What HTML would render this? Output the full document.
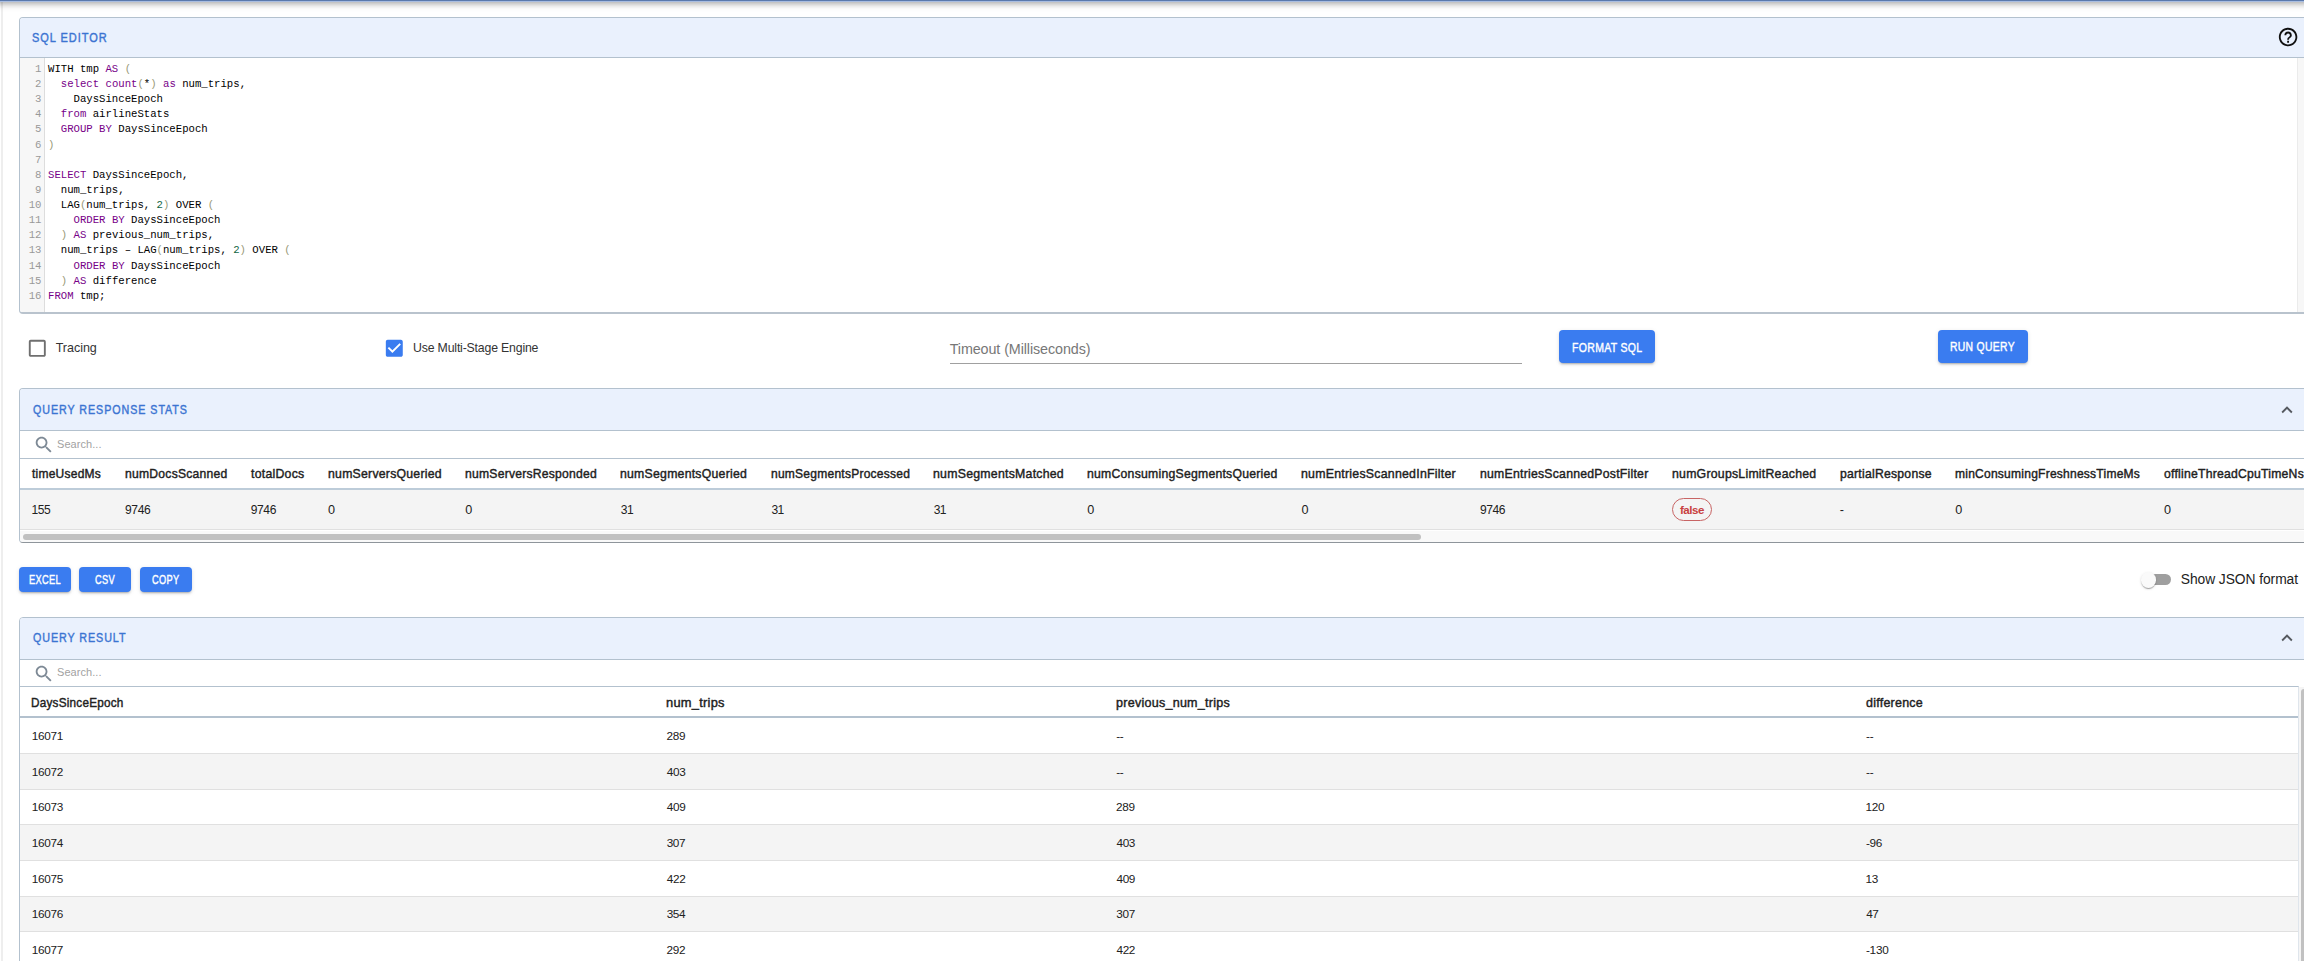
<!DOCTYPE html>
<html><head><meta charset="utf-8"><style>
html,body{margin:0;padding:0;background:#fff;}
body{width:2304px;height:961px;overflow:hidden;position:relative;font-family:"Liberation Sans",sans-serif;}
.t{position:absolute;white-space:pre;line-height:1;}
</style></head><body>
<div style="position:absolute;left:-60px;top:-61px;width:2424px;height:62px;background:#5a79ad;border-bottom:1px solid #a9bde0;box-shadow:0 2px 4px -1px rgba(0,0,0,0.16),0 4px 5px 0 rgba(0,0,0,0.11),0 1px 10px 0 rgba(0,0,0,0.10);z-index:5"></div>
<div style="position:absolute;left:1px;top:0;width:2px;height:961px;background:#eeeeee"></div>
<div style="position:absolute;left:19px;top:17px;width:2400px;height:294px;border:1px solid #B3C1CE;border-bottom:2px solid #b9c3cd;border-radius:4px;overflow:hidden;background:#fff">
<div style="position:absolute;left:0;top:0;width:100%;height:39px;background:#EAF1FD;border-bottom:1px solid #B3C1CE"></div>
<div style="position:absolute;left:0;top:40px;width:24px;height:260px;background:#f7f7f7;border-right:1px solid #ddd"></div>
</div>
<div style="position:absolute;left:2297px;top:58px;width:7px;height:254px;background:#f7f7f7;border-left:1px solid #ebebeb"></div>
<div class="t" style="left:31.81px;top:32.01px;font-size:12.35px;font-family:'Liberation Sans',sans-serif;font-weight:400;color:#3b74d2;letter-spacing:1.100px;transform:scaleX(0.8901);transform-origin:0 0;-webkit-text-stroke:0.42px #3b74d2;">SQL EDITOR</div>
<svg style="position:absolute;left:2276.8px;top:25.9px" width="22.2" height="22.2" viewBox="0 0 24 24"><path fill="#111" d="M11 18h2v-2h-2v2zm1-16C6.48 2 2 6.48 2 12s4.48 10 10 10 10-4.48 10-10S17.52 2 12 2zm0 18c-4.41 0-8-3.59-8-8s3.59-8 8-8 8 3.59 8 8-3.59 8-8 8zm0-14c-2.21 0-4 1.79-4 4h2c0-1.1.9-2 2-2s2 .9 2 2c0 2-3 1.75-3 5h2c0-2.25 3-2.5 3-5 0-2.21-1.79-4-4-4z"/></svg>
<div class="t" style="left:48px;top:64.01px;font-size:10.65px;font-family:'Liberation Mono',monospace;color:#000;white-space:pre">WITH tmp <span style="color:#708">AS</span> <span style="color:#997">(</span></div>
<div class="t" style="left:0;width:41.5px;text-align:right;top:64.01px;font-size:10.65px;font-family:'Liberation Mono',monospace;color:#999">1</div>
<div class="t" style="left:48px;top:79.01px;font-size:10.65px;font-family:'Liberation Mono',monospace;color:#000;white-space:pre">  <span style="color:#708">select</span> <span style="color:#708">count</span><span style="color:#997">(</span>*<span style="color:#997">)</span> <span style="color:#708">as</span> num_trips,</div>
<div class="t" style="left:0;width:41.5px;text-align:right;top:79.01px;font-size:10.65px;font-family:'Liberation Mono',monospace;color:#999">2</div>
<div class="t" style="left:48px;top:94.00px;font-size:10.65px;font-family:'Liberation Mono',monospace;color:#000;white-space:pre">    DaysSinceEpoch</div>
<div class="t" style="left:0;width:41.5px;text-align:right;top:94.00px;font-size:10.65px;font-family:'Liberation Mono',monospace;color:#999">3</div>
<div class="t" style="left:48px;top:109.01px;font-size:10.65px;font-family:'Liberation Mono',monospace;color:#000;white-space:pre">  <span style="color:#708">from</span> airlineStats</div>
<div class="t" style="left:0;width:41.5px;text-align:right;top:109.01px;font-size:10.65px;font-family:'Liberation Mono',monospace;color:#999">4</div>
<div class="t" style="left:48px;top:124.01px;font-size:10.65px;font-family:'Liberation Mono',monospace;color:#000;white-space:pre">  <span style="color:#708">GROUP</span> <span style="color:#708">BY</span> DaysSinceEpoch</div>
<div class="t" style="left:0;width:41.5px;text-align:right;top:124.01px;font-size:10.65px;font-family:'Liberation Mono',monospace;color:#999">5</div>
<div class="t" style="left:48px;top:140.02px;font-size:10.65px;font-family:'Liberation Mono',monospace;color:#000;white-space:pre"><span style="color:#997">)</span></div>
<div class="t" style="left:0;width:41.5px;text-align:right;top:140.02px;font-size:10.65px;font-family:'Liberation Mono',monospace;color:#999">6</div>
<div class="t" style="left:48px;top:155.01px;font-size:10.65px;font-family:'Liberation Mono',monospace;color:#000;white-space:pre"></div>
<div class="t" style="left:0;width:41.5px;text-align:right;top:155.01px;font-size:10.65px;font-family:'Liberation Mono',monospace;color:#999">7</div>
<div class="t" style="left:48px;top:170.01px;font-size:10.65px;font-family:'Liberation Mono',monospace;color:#000;white-space:pre"><span style="color:#708">SELECT</span> DaysSinceEpoch,</div>
<div class="t" style="left:0;width:41.5px;text-align:right;top:170.01px;font-size:10.65px;font-family:'Liberation Mono',monospace;color:#999">8</div>
<div class="t" style="left:48px;top:185.02px;font-size:10.65px;font-family:'Liberation Mono',monospace;color:#000;white-space:pre">  num_trips,</div>
<div class="t" style="left:0;width:41.5px;text-align:right;top:185.02px;font-size:10.65px;font-family:'Liberation Mono',monospace;color:#999">9</div>
<div class="t" style="left:48px;top:200.01px;font-size:10.65px;font-family:'Liberation Mono',monospace;color:#000;white-space:pre">  LAG<span style="color:#997">(</span>num_trips, <span style="color:#164">2</span><span style="color:#997">)</span> OVER <span style="color:#997">(</span></div>
<div class="t" style="left:0;width:41.5px;text-align:right;top:200.01px;font-size:10.65px;font-family:'Liberation Mono',monospace;color:#999">10</div>
<div class="t" style="left:48px;top:215.01px;font-size:10.65px;font-family:'Liberation Mono',monospace;color:#000;white-space:pre">    <span style="color:#708">ORDER</span> <span style="color:#708">BY</span> DaysSinceEpoch</div>
<div class="t" style="left:0;width:41.5px;text-align:right;top:215.01px;font-size:10.65px;font-family:'Liberation Mono',monospace;color:#999">11</div>
<div class="t" style="left:48px;top:230.02px;font-size:10.65px;font-family:'Liberation Mono',monospace;color:#000;white-space:pre">  <span style="color:#997">)</span> <span style="color:#708">AS</span> previous_num_trips,</div>
<div class="t" style="left:0;width:41.5px;text-align:right;top:230.02px;font-size:10.65px;font-family:'Liberation Mono',monospace;color:#999">12</div>
<div class="t" style="left:48px;top:245.01px;font-size:10.65px;font-family:'Liberation Mono',monospace;color:#000;white-space:pre">  num_trips – LAG<span style="color:#997">(</span>num_trips, <span style="color:#164">2</span><span style="color:#997">)</span> OVER <span style="color:#997">(</span></div>
<div class="t" style="left:0;width:41.5px;text-align:right;top:245.01px;font-size:10.65px;font-family:'Liberation Mono',monospace;color:#999">13</div>
<div class="t" style="left:48px;top:261.01px;font-size:10.65px;font-family:'Liberation Mono',monospace;color:#000;white-space:pre">    <span style="color:#708">ORDER</span> <span style="color:#708">BY</span> DaysSinceEpoch</div>
<div class="t" style="left:0;width:41.5px;text-align:right;top:261.01px;font-size:10.65px;font-family:'Liberation Mono',monospace;color:#999">14</div>
<div class="t" style="left:48px;top:276.02px;font-size:10.65px;font-family:'Liberation Mono',monospace;color:#000;white-space:pre">  <span style="color:#997">)</span> <span style="color:#708">AS</span> difference</div>
<div class="t" style="left:0;width:41.5px;text-align:right;top:276.02px;font-size:10.65px;font-family:'Liberation Mono',monospace;color:#999">15</div>
<div class="t" style="left:48px;top:291.00px;font-size:10.65px;font-family:'Liberation Mono',monospace;color:#000;white-space:pre"><span style="color:#708">FROM</span> tmp;</div>
<div class="t" style="left:0;width:41.5px;text-align:right;top:291.00px;font-size:10.65px;font-family:'Liberation Mono',monospace;color:#999">16</div>
<svg style="position:absolute;left:26.2px;top:337.3px" width="22.6" height="22.6" viewBox="0 0 24 24"><path fill="#6f6f6f" d="M19 5v14H5V5h14m0-2H5c-1.11 0-2 .9-2 2v14c0 1.1.89 2 2 2h14c1.1 0 2-.9 2-2V5c0-1.1-.9-2-2-2z"/></svg>
<div class="t" style="left:55.72px;top:342.00px;font-size:12.55px;font-family:'Liberation Sans',sans-serif;font-weight:400;color:#333;letter-spacing:-0.050px;">Tracing</div>
<svg style="position:absolute;left:382.9px;top:337.3px" width="22.6" height="22.6" viewBox="0 0 24 24"><path fill="#3a7cf0" d="M19 3H5c-1.11 0-2 .9-2 2v14c0 1.1.89 2 2 2h14c1.11 0 2-.9 2-2V5c0-1.1-.89-2-2-2zm-9 14l-5-5 1.41-1.41L10 14.17l7.59-7.59L19 8l-9 9z"/></svg>
<div class="t" style="left:413.05px;top:342.02px;font-size:12.29px;font-family:'Liberation Sans',sans-serif;font-weight:400;color:#333;letter-spacing:-0.172px;">Use Multi-Stage Engine</div>
<div class="t" style="left:949.68px;top:342.00px;font-size:14.34px;font-family:'Liberation Sans',sans-serif;font-weight:400;color:#777;letter-spacing:-0.093px;">Timeout (Milliseconds)</div>
<div style="position:absolute;left:950px;top:363px;width:572px;height:1px;background:#a0a0a0"></div>
<div style="position:absolute;left:1559.4px;top:330.2px;width:95.6px;height:32.6px;background:#3a7cf0;border-radius:4px;box-shadow:0 3px 1px -2px rgba(0,0,0,0.14),0 2px 2px 0 rgba(0,0,0,0.10),0 1px 5px 0 rgba(0,0,0,0.09)"></div>
<div class="t" style="left:1571.84px;top:341.00px;font-size:13.08px;font-family:'Liberation Sans',sans-serif;font-weight:400;color:#fff;letter-spacing:0.400px;transform:scaleX(0.8031);transform-origin:0 0;-webkit-text-stroke:0.42px #fff;">FORMAT SQL</div>
<div style="position:absolute;left:1937.7px;top:330.2px;width:90.2px;height:32.6px;background:#3a7cf0;border-radius:4px;box-shadow:0 3px 1px -2px rgba(0,0,0,0.14),0 2px 2px 0 rgba(0,0,0,0.10),0 1px 5px 0 rgba(0,0,0,0.09)"></div>
<div class="t" style="left:1950.05px;top:341.01px;font-size:12.65px;font-family:'Liberation Sans',sans-serif;font-weight:400;color:#fff;letter-spacing:0.400px;transform:scaleX(0.8190);transform-origin:0 0;-webkit-text-stroke:0.42px #fff;">RUN QUERY</div>
<div style="position:absolute;left:19px;top:388px;width:2400px;height:153px;border:1px solid #B3C1CE;border-bottom:1px solid #8e959b;border-radius:4px;overflow:hidden;background:#fff">
<div style="position:absolute;left:0;top:0;width:100%;height:41px;background:#EAF1FD;border-bottom:1px solid #B3C1CE"></div>
<div style="position:absolute;left:0;top:69px;width:100%;height:0;border-top:1px solid #B3C1CE"></div>
<div style="position:absolute;left:0;top:99px;width:100%;height:39px;background:#f4f4f4;border-top:2px solid #BDCCD9;border-bottom:1px solid #e0e0e0"></div>
<div style="position:absolute;left:0;top:142px;width:100%;height:11px;background:#f9f9f9"></div>
<div style="position:absolute;left:3px;top:144.5px;width:1398px;height:6.5px;background:#c1c1c1;border-radius:4px"></div>
</div>
<div class="t" style="left:32.80px;top:404.01px;font-size:12.50px;font-family:'Liberation Sans',sans-serif;font-weight:400;color:#3b74d2;letter-spacing:1.100px;transform:scaleX(0.8567);transform-origin:0 0;-webkit-text-stroke:0.42px #3b74d2;">QUERY RESPONSE STATS</div>
<svg style="position:absolute;left:2275.6px;top:398.6px" width="22" height="22" viewBox="0 0 24 24"><path fill="#55595f" d="M12 8l-6 6 1.41 1.41L12 10.83l4.59 4.58L18 14z"/></svg>
<svg style="position:absolute;left:32.7px;top:434.0px" width="21.7" height="21.7" viewBox="0 0 24 24"><path fill="#7d8995" d="M15.5 14h-.79l-.28-.27C15.41 12.59 16 11.11 16 9.5 16 5.91 13.09 3 9.5 3S3 5.91 3 9.5 5.91 16 9.5 16c1.61 0 3.09-.59 4.23-1.57l.27.28v.79l5 4.99L20.49 19l-4.99-5zm-6 0C7.01 14 5 11.99 5 9.5S7.01 5 9.5 5 14 7.01 14 9.5 11.99 14 9.5 14z"/></svg>
<div class="t" style="left:57.00px;top:439.02px;font-size:11.01px;font-family:'Liberation Sans',sans-serif;font-weight:400;color:#a2a2a2;letter-spacing:0.054px;">Search...</div>
<div class="t" style="left:32.22px;top:468.01px;font-size:12.94px;font-family:'Liberation Sans',sans-serif;font-weight:400;color:#212121;letter-spacing:0.250px;transform:scaleX(0.9282);transform-origin:0 0;-webkit-text-stroke:0.42px #212121;">timeUsedMs</div>
<div class="t" style="left:31.48px;top:504.02px;font-size:12.06px;font-family:'Liberation Sans',sans-serif;font-weight:400;color:#212121;letter-spacing:-0.431px;">155</div>
<div class="t" style="left:124.80px;top:468.01px;font-size:12.94px;font-family:'Liberation Sans',sans-serif;font-weight:400;color:#212121;letter-spacing:0.250px;transform:scaleX(0.9388);transform-origin:0 0;-webkit-text-stroke:0.42px #212121;">numDocsScanned</div>
<div class="t" style="left:125.05px;top:504.02px;font-size:12.06px;font-family:'Liberation Sans',sans-serif;font-weight:400;color:#212121;letter-spacing:-0.395px;">9746</div>
<div class="t" style="left:251.12px;top:468.01px;font-size:12.94px;font-family:'Liberation Sans',sans-serif;font-weight:400;color:#212121;letter-spacing:0.250px;transform:scaleX(0.9519);transform-origin:0 0;-webkit-text-stroke:0.42px #212121;">totalDocs</div>
<div class="t" style="left:250.75px;top:504.02px;font-size:12.06px;font-family:'Liberation Sans',sans-serif;font-weight:400;color:#212121;letter-spacing:-0.395px;">9746</div>
<div class="t" style="left:327.69px;top:468.01px;font-size:12.94px;font-family:'Liberation Sans',sans-serif;font-weight:400;color:#212121;letter-spacing:0.250px;transform:scaleX(0.9486);transform-origin:0 0;-webkit-text-stroke:0.42px #212121;">numServersQueried</div>
<div class="t" style="left:328.01px;top:504.01px;font-size:12.65px;font-family:'Liberation Sans',sans-serif;font-weight:400;color:#212121;letter-spacing:0.000px;">0</div>
<div class="t" style="left:464.90px;top:468.01px;font-size:12.94px;font-family:'Liberation Sans',sans-serif;font-weight:400;color:#212121;letter-spacing:0.250px;transform:scaleX(0.9386);transform-origin:0 0;-webkit-text-stroke:0.42px #212121;">numServersResponded</div>
<div class="t" style="left:465.21px;top:504.01px;font-size:12.65px;font-family:'Liberation Sans',sans-serif;font-weight:400;color:#212121;letter-spacing:0.000px;">0</div>
<div class="t" style="left:620.49px;top:468.01px;font-size:12.94px;font-family:'Liberation Sans',sans-serif;font-weight:400;color:#212121;letter-spacing:0.250px;transform:scaleX(0.9485);transform-origin:0 0;-webkit-text-stroke:0.42px #212121;">numSegmentsQueried</div>
<div class="t" style="left:620.84px;top:504.02px;font-size:12.06px;font-family:'Liberation Sans',sans-serif;font-weight:400;color:#212121;letter-spacing:-0.570px;">31</div>
<div class="t" style="left:771.11px;top:468.01px;font-size:12.94px;font-family:'Liberation Sans',sans-serif;font-weight:400;color:#212121;letter-spacing:0.250px;transform:scaleX(0.9303);transform-origin:0 0;-webkit-text-stroke:0.42px #212121;">numSegmentsProcessed</div>
<div class="t" style="left:771.44px;top:504.02px;font-size:12.06px;font-family:'Liberation Sans',sans-serif;font-weight:400;color:#212121;letter-spacing:-0.570px;">31</div>
<div class="t" style="left:933.39px;top:468.01px;font-size:12.94px;font-family:'Liberation Sans',sans-serif;font-weight:400;color:#212121;letter-spacing:0.250px;transform:scaleX(0.9521);transform-origin:0 0;-webkit-text-stroke:0.42px #212121;">numSegmentsMatched</div>
<div class="t" style="left:933.74px;top:504.02px;font-size:12.06px;font-family:'Liberation Sans',sans-serif;font-weight:400;color:#212121;letter-spacing:-0.570px;">31</div>
<div class="t" style="left:1086.99px;top:468.01px;font-size:12.94px;font-family:'Liberation Sans',sans-serif;font-weight:400;color:#212121;letter-spacing:0.250px;transform:scaleX(0.9455);transform-origin:0 0;-webkit-text-stroke:0.42px #212121;">numConsumingSegmentsQueried</div>
<div class="t" style="left:1087.31px;top:504.01px;font-size:12.65px;font-family:'Liberation Sans',sans-serif;font-weight:400;color:#212121;letter-spacing:0.000px;">0</div>
<div class="t" style="left:1301.09px;top:468.01px;font-size:12.94px;font-family:'Liberation Sans',sans-serif;font-weight:400;color:#212121;letter-spacing:0.250px;transform:scaleX(0.9542);transform-origin:0 0;-webkit-text-stroke:0.42px #212121;">numEntriesScannedInFilter</div>
<div class="t" style="left:1301.41px;top:504.01px;font-size:12.65px;font-family:'Liberation Sans',sans-serif;font-weight:400;color:#212121;letter-spacing:0.000px;">0</div>
<div class="t" style="left:1479.69px;top:468.01px;font-size:12.94px;font-family:'Liberation Sans',sans-serif;font-weight:400;color:#212121;letter-spacing:0.250px;transform:scaleX(0.9469);transform-origin:0 0;-webkit-text-stroke:0.42px #212121;">numEntriesScannedPostFilter</div>
<div class="t" style="left:1479.95px;top:504.02px;font-size:12.06px;font-family:'Liberation Sans',sans-serif;font-weight:400;color:#212121;letter-spacing:-0.395px;">9746</div>
<div class="t" style="left:1671.79px;top:468.01px;font-size:12.94px;font-family:'Liberation Sans',sans-serif;font-weight:400;color:#212121;letter-spacing:0.250px;transform:scaleX(0.9500);transform-origin:0 0;-webkit-text-stroke:0.42px #212121;">numGroupsLimitReached</div>
<div class="t" style="left:1839.52px;top:468.01px;font-size:12.94px;font-family:'Liberation Sans',sans-serif;font-weight:400;color:#212121;letter-spacing:0.250px;transform:scaleX(0.9437);transform-origin:0 0;-webkit-text-stroke:0.42px #212121;">partialResponse</div>
<div class="t" style="left:1839.74px;top:504.01px;font-size:12.65px;font-family:'Liberation Sans',sans-serif;font-weight:400;color:#212121;letter-spacing:0.000px;">-</div>
<div class="t" style="left:1954.91px;top:468.01px;font-size:12.94px;font-family:'Liberation Sans',sans-serif;font-weight:400;color:#212121;letter-spacing:0.250px;transform:scaleX(0.9303);transform-origin:0 0;-webkit-text-stroke:0.42px #212121;">minConsumingFreshnessTimeMs</div>
<div class="t" style="left:1955.21px;top:504.01px;font-size:12.65px;font-family:'Liberation Sans',sans-serif;font-weight:400;color:#212121;letter-spacing:0.000px;">0</div>
<div class="t" style="left:2163.99px;top:468.01px;font-size:12.94px;font-family:'Liberation Sans',sans-serif;font-weight:400;color:#212121;letter-spacing:0.250px;transform:scaleX(0.9421);transform-origin:0 0;-webkit-text-stroke:0.42px #212121;">offlineThreadCpuTimeNs</div>
<div class="t" style="left:2164.01px;top:504.01px;font-size:12.65px;font-family:'Liberation Sans',sans-serif;font-weight:400;color:#212121;letter-spacing:0.000px;">0</div>
<div style="position:absolute;left:1672px;top:497.9px;width:38px;height:21px;border:1px solid #c86464;border-radius:12px"></div>
<div class="t" style="left:1680.00px;top:505.01px;font-size:11.56px;font-family:'Liberation Sans',sans-serif;font-weight:700;color:#c84040;letter-spacing:-0.486px;">false</div>
<div style="position:absolute;left:19.1px;top:567.2px;width:51.7px;height:24.7px;background:#3a7cf0;border-radius:4px;box-shadow:0 3px 1px -2px rgba(0,0,0,0.14),0 2px 2px 0 rgba(0,0,0,0.10),0 1px 5px 0 rgba(0,0,0,0.09)"></div>
<div class="t" style="left:29.04px;top:575.00px;font-size:11.92px;font-family:'Liberation Sans',sans-serif;font-weight:400;color:#fff;letter-spacing:0.400px;transform:scaleX(0.7759);transform-origin:0 0;-webkit-text-stroke:0.42px #fff;">EXCEL</div>
<div style="position:absolute;left:79.2px;top:567.2px;width:51.6px;height:24.7px;background:#3a7cf0;border-radius:4px;box-shadow:0 3px 1px -2px rgba(0,0,0,0.14),0 2px 2px 0 rgba(0,0,0,0.10),0 1px 5px 0 rgba(0,0,0,0.09)"></div>
<div class="t" style="left:95.44px;top:575.00px;font-size:11.92px;font-family:'Liberation Sans',sans-serif;font-weight:400;color:#fff;letter-spacing:0.400px;transform:scaleX(0.7745);transform-origin:0 0;-webkit-text-stroke:0.42px #fff;">CSV</div>
<div style="position:absolute;left:139.8px;top:567.2px;width:51.8px;height:24.7px;background:#3a7cf0;border-radius:4px;box-shadow:0 3px 1px -2px rgba(0,0,0,0.14),0 2px 2px 0 rgba(0,0,0,0.10),0 1px 5px 0 rgba(0,0,0,0.09)"></div>
<div class="t" style="left:151.94px;top:575.00px;font-size:11.92px;font-family:'Liberation Sans',sans-serif;font-weight:400;color:#fff;letter-spacing:0.400px;transform:scaleX(0.7738);transform-origin:0 0;-webkit-text-stroke:0.42px #fff;">COPY</div>
<div style="position:absolute;left:2146px;top:574px;width:25px;height:11px;background:#9f9f9f;border-radius:6px"></div>
<div style="position:absolute;left:2140.5px;top:571.8px;width:15.8px;height:15.8px;background:#fafafa;border-radius:50%;box-shadow:0 2px 1px -1px rgba(0,0,0,0.2),0 1px 1px 0 rgba(0,0,0,0.14),0 1px 3px 0 rgba(0,0,0,0.12)"></div>
<div class="t" style="left:2180.78px;top:573.01px;font-size:13.83px;font-family:'Liberation Sans',sans-serif;font-weight:400;color:#212121;letter-spacing:-0.069px;">Show JSON format</div>
<div style="position:absolute;left:19px;top:616.5px;width:2400px;height:400px;border:1px solid #B3C1CE;border-radius:4px;overflow:hidden;background:#fff">
<div style="position:absolute;left:0;top:0;width:100%;height:41px;background:#EAF1FD;border-bottom:1px solid #B3C1CE"></div>
</div>
<div style="position:absolute;left:20px;top:686px;width:2278px;height:300px;border-top:1px solid #B3C1CE;border-right:1px solid #dfe5ec"></div>
<div style="position:absolute;left:20px;top:716px;width:2278px;height:0;border-top:2px solid #B3C1CE"></div>
<div style="position:absolute;left:20px;top:718.00px;width:2278px;height:36.00px;background:#fff"></div>
<div style="position:absolute;left:20px;top:753.00px;width:2278px;height:36.66px;background:#f4f4f4"></div>
<div style="position:absolute;left:20px;top:788.66px;width:2278px;height:36.66px;background:#fff"></div>
<div style="position:absolute;left:20px;top:824.32px;width:2278px;height:36.66px;background:#f4f4f4"></div>
<div style="position:absolute;left:20px;top:859.98px;width:2278px;height:36.66px;background:#fff"></div>
<div style="position:absolute;left:20px;top:895.64px;width:2278px;height:36.66px;background:#f4f4f4"></div>
<div style="position:absolute;left:20px;top:931.30px;width:2278px;height:36.66px;background:#fff"></div>
<div style="position:absolute;left:20px;top:753.00px;width:2278px;height:1px;background:#e0e0e0"></div>
<div class="t" style="left:31.81px;top:730.01px;font-size:11.77px;font-family:'Liberation Sans',sans-serif;font-weight:400;color:#212121;letter-spacing:-0.279px;">16071</div>
<div class="t" style="left:666.51px;top:730.01px;font-size:11.77px;font-family:'Liberation Sans',sans-serif;font-weight:400;color:#212121;letter-spacing:-0.330px;">289</div>
<div class="t" style="left:1116.18px;top:730.01px;font-size:11.77px;font-family:'Liberation Sans',sans-serif;font-weight:400;color:#212121;letter-spacing:-0.243px;">--</div>
<div class="t" style="left:1865.98px;top:730.01px;font-size:11.77px;font-family:'Liberation Sans',sans-serif;font-weight:400;color:#212121;letter-spacing:-0.243px;">--</div>
<div style="position:absolute;left:20px;top:788.66px;width:2278px;height:1px;background:#e0e0e0"></div>
<div class="t" style="left:31.81px;top:766.01px;font-size:11.77px;font-family:'Liberation Sans',sans-serif;font-weight:400;color:#212121;letter-spacing:-0.278px;">16072</div>
<div class="t" style="left:666.84px;top:766.01px;font-size:11.77px;font-family:'Liberation Sans',sans-serif;font-weight:400;color:#212121;letter-spacing:-0.336px;">403</div>
<div class="t" style="left:1116.18px;top:766.01px;font-size:11.77px;font-family:'Liberation Sans',sans-serif;font-weight:400;color:#212121;letter-spacing:-0.243px;">--</div>
<div class="t" style="left:1865.98px;top:766.01px;font-size:11.77px;font-family:'Liberation Sans',sans-serif;font-weight:400;color:#212121;letter-spacing:-0.243px;">--</div>
<div style="position:absolute;left:20px;top:824.32px;width:2278px;height:1px;background:#e0e0e0"></div>
<div class="t" style="left:31.81px;top:801.00px;font-size:11.77px;font-family:'Liberation Sans',sans-serif;font-weight:400;color:#212121;letter-spacing:-0.279px;">16073</div>
<div class="t" style="left:666.84px;top:801.00px;font-size:11.77px;font-family:'Liberation Sans',sans-serif;font-weight:400;color:#212121;letter-spacing:-0.335px;">409</div>
<div class="t" style="left:1116.11px;top:801.00px;font-size:11.77px;font-family:'Liberation Sans',sans-serif;font-weight:400;color:#212121;letter-spacing:-0.330px;">289</div>
<div class="t" style="left:1865.61px;top:801.00px;font-size:11.77px;font-family:'Liberation Sans',sans-serif;font-weight:400;color:#212121;letter-spacing:-0.326px;">120</div>
<div style="position:absolute;left:20px;top:859.98px;width:2278px;height:1px;background:#e0e0e0"></div>
<div class="t" style="left:31.81px;top:837.00px;font-size:11.77px;font-family:'Liberation Sans',sans-serif;font-weight:400;color:#212121;letter-spacing:-0.281px;">16074</div>
<div class="t" style="left:666.65px;top:837.00px;font-size:11.77px;font-family:'Liberation Sans',sans-serif;font-weight:400;color:#212121;letter-spacing:-0.331px;">307</div>
<div class="t" style="left:1116.44px;top:837.00px;font-size:11.77px;font-family:'Liberation Sans',sans-serif;font-weight:400;color:#212121;letter-spacing:-0.336px;">403</div>
<div class="t" style="left:1865.98px;top:837.00px;font-size:11.77px;font-family:'Liberation Sans',sans-serif;font-weight:400;color:#212121;letter-spacing:-0.285px;">-96</div>
<div style="position:absolute;left:20px;top:895.64px;width:2278px;height:1px;background:#e0e0e0"></div>
<div class="t" style="left:31.81px;top:873.00px;font-size:11.77px;font-family:'Liberation Sans',sans-serif;font-weight:400;color:#212121;letter-spacing:-0.279px;">16075</div>
<div class="t" style="left:666.84px;top:873.00px;font-size:11.77px;font-family:'Liberation Sans',sans-serif;font-weight:400;color:#212121;letter-spacing:-0.335px;">422</div>
<div class="t" style="left:1116.44px;top:873.00px;font-size:11.77px;font-family:'Liberation Sans',sans-serif;font-weight:400;color:#212121;letter-spacing:-0.335px;">409</div>
<div class="t" style="left:1865.61px;top:873.00px;font-size:11.77px;font-family:'Liberation Sans',sans-serif;font-weight:400;color:#212121;letter-spacing:-0.417px;">13</div>
<div style="position:absolute;left:20px;top:931.30px;width:2278px;height:1px;background:#e0e0e0"></div>
<div class="t" style="left:31.81px;top:908.01px;font-size:11.77px;font-family:'Liberation Sans',sans-serif;font-weight:400;color:#212121;letter-spacing:-0.279px;">16076</div>
<div class="t" style="left:666.65px;top:908.01px;font-size:11.77px;font-family:'Liberation Sans',sans-serif;font-weight:400;color:#212121;letter-spacing:-0.336px;">354</div>
<div class="t" style="left:1116.25px;top:908.01px;font-size:11.77px;font-family:'Liberation Sans',sans-serif;font-weight:400;color:#212121;letter-spacing:-0.331px;">307</div>
<div class="t" style="left:1866.24px;top:908.01px;font-size:11.77px;font-family:'Liberation Sans',sans-serif;font-weight:400;color:#212121;letter-spacing:-0.436px;">47</div>
<div style="position:absolute;left:20px;top:966.96px;width:2278px;height:1px;background:#e0e0e0"></div>
<div class="t" style="left:31.81px;top:944.01px;font-size:11.77px;font-family:'Liberation Sans',sans-serif;font-weight:400;color:#212121;letter-spacing:-0.278px;">16077</div>
<div class="t" style="left:666.51px;top:944.01px;font-size:11.77px;font-family:'Liberation Sans',sans-serif;font-weight:400;color:#212121;letter-spacing:-0.329px;">292</div>
<div class="t" style="left:1116.44px;top:944.01px;font-size:11.77px;font-family:'Liberation Sans',sans-serif;font-weight:400;color:#212121;letter-spacing:-0.335px;">422</div>
<div class="t" style="left:1865.98px;top:944.01px;font-size:11.77px;font-family:'Liberation Sans',sans-serif;font-weight:400;color:#212121;letter-spacing:-0.268px;">-130</div>
<div style="position:absolute;left:2299px;top:687px;width:5px;height:280px;background:#f5f5f5"></div>
<div style="position:absolute;left:2301.3px;top:688.8px;width:6px;height:280px;background:#c1c1c1;border-radius:3px"></div>
<svg style="position:absolute;left:2275.6px;top:626.6px" width="22" height="22" viewBox="0 0 24 24"><path fill="#55595f" d="M12 8l-6 6 1.41 1.41L12 10.83l4.59 4.58L18 14z"/></svg>
<div class="t" style="left:32.59px;top:631.01px;font-size:13.08px;font-family:'Liberation Sans',sans-serif;font-weight:400;color:#3b74d2;letter-spacing:1.100px;transform:scaleX(0.8233);transform-origin:0 0;-webkit-text-stroke:0.42px #3b74d2;">QUERY RESULT</div>
<svg style="position:absolute;left:32.7px;top:662.5px" width="21.7" height="21.7" viewBox="0 0 24 24"><path fill="#7d8995" d="M15.5 14h-.79l-.28-.27C15.41 12.59 16 11.11 16 9.5 16 5.91 13.09 3 9.5 3S3 5.91 3 9.5 5.91 16 9.5 16c1.61 0 3.09-.59 4.23-1.57l.27.28v.79l5 4.99L20.49 19l-4.99-5zm-6 0C7.01 14 5 11.99 5 9.5S7.01 5 9.5 5 14 7.01 14 9.5 11.99 14 9.5 14z"/></svg>
<div class="t" style="left:57.00px;top:667.02px;font-size:11.01px;font-family:'Liberation Sans',sans-serif;font-weight:400;color:#a2a2a2;letter-spacing:0.054px;">Search...</div>
<div class="t" style="left:31.34px;top:697.01px;font-size:12.94px;font-family:'Liberation Sans',sans-serif;font-weight:400;color:#212121;letter-spacing:0.250px;transform:scaleX(0.9072);transform-origin:0 0;-webkit-text-stroke:0.42px #212121;">DaysSinceEpoch</div>
<div class="t" style="left:665.95px;top:697.01px;font-size:12.94px;font-family:'Liberation Sans',sans-serif;font-weight:400;color:#212121;letter-spacing:0.250px;transform:scaleX(0.9951);transform-origin:0 0;-webkit-text-stroke:0.42px #212121;">num_trips</div>
<div class="t" style="left:1115.60px;top:697.01px;font-size:12.94px;font-family:'Liberation Sans',sans-serif;font-weight:400;color:#212121;letter-spacing:0.250px;transform:scaleX(0.9711);transform-origin:0 0;-webkit-text-stroke:0.42px #212121;">previous_num_trips</div>
<div class="t" style="left:1865.68px;top:697.01px;font-size:12.94px;font-family:'Liberation Sans',sans-serif;font-weight:400;color:#212121;letter-spacing:0.250px;transform:scaleX(0.9652);transform-origin:0 0;-webkit-text-stroke:0.42px #212121;">difference</div>
</body></html>
